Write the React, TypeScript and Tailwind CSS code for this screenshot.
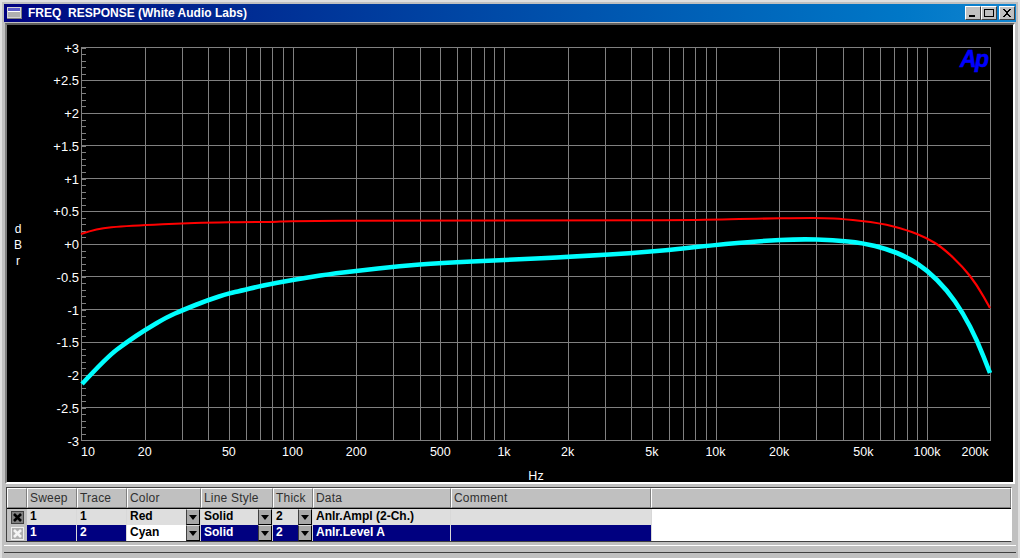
const FONT = '"Liberation Sans", Arial, sans-serif';

const lineX = (f: number) => 81 + 211.5 * Math.log10(f / 10);

const gridFreqs = [
  20, 30, 40, 50, 60, 70, 80, 90, 100, 200, 300, 400, 500, 600, 700, 800, 900, 1000, 2000, 3000, 4000, 5000, 6000, 7000,
  8000, 9000, 10000, 20000, 30000, 40000, 50000, 60000, 70000, 80000, 90000, 100000,
];

const xLabels = [
  ['10', 10], ['20', 20], ['50', 50], ['100', 100], ['200', 200], ['500', 500], ['1k', 1000], ['2k', 2000],
  ['5k', 5000], ['10k', 10000], ['20k', 20000], ['50k', 50000], ['100k', 100000],
] as const;

const yLabels = ['+3', '+2.5', '+2', '+1.5', '+1', '+0.5', '+0', '-0.5', '-1', '-1.5', '-2', '-2.5', '-3'];

const redTrace = [
  [81, 234], [90, 231], [103, 228], [120, 226.5], [145, 225], [180, 223.5], [209, 222.5], [250, 222], [275, 222],
  [285, 221], [400, 220.5], [600, 220.5], [700, 220], [760, 218.5], [800, 218], [825, 218], [843, 219], [880, 223],
  [907, 230], [927, 238], [943, 248], [963, 267], [977, 285], [990, 308],
];

const cyanTrace = [
  [82, 384], [107, 357], [127, 342], [145, 330], [167, 317], [183, 310], [208, 300], [230, 293], [240, 291], [260, 286],
  [292, 280], [330, 274], [356, 271], [400, 266], [440, 263], [504, 260], [568, 257], [650, 252], [715, 245], [760, 241],
  [800, 239], [833, 240], [863, 243], [887, 249], [907, 257], [927, 270], [947, 290], [963, 313], [977, 340], [990, 373],
];

// quadratic through the midpoints, so the traces don't look faceted
const toPath = (pts: number[][]) => {
  let d = `M${pts[0][0]} ${pts[0][1]}`;
  for (let i = 1; i < pts.length - 1; i++) {
    const mx = (pts[i][0] + pts[i + 1][0]) / 2;
    const my = (pts[i][1] + pts[i + 1][1]) / 2;
    d += ` Q${pts[i][0]} ${pts[i][1]} ${mx} ${my}`;
  }
  const last = pts[pts.length - 1];
  return `${d} L${last[0]} ${last[1]}`;
};

function FreqChart() {
  const plotTop = 47.5;
  const plotBottom = 440.5;
  const step = (plotBottom - plotTop) / 12;
  return (
    <svg viewBox="7 25 1006 457" className="block h-[457px] w-[1006px] bg-black" style={{ fontFamily: FONT }}>
      <g stroke="#808080" strokeWidth="1" shapeRendering="crispEdges">
        {gridFreqs.map((f) => (
          <line key={f} x1={Math.round(lineX(f)) + 0.5} x2={Math.round(lineX(f)) + 0.5} y1={plotTop} y2={plotBottom} />
        ))}
        {yLabels.map((_, i) => (
          <line key={i} x1={81} x2={990.5} y1={Math.round(plotTop + i * step - 0.5) + 0.5} y2={Math.round(plotTop + i * step - 0.5) + 0.5} />
        ))}
        {/* minor ticks on the left axis */}
        {Array.from({ length: 60 }, (_, i) => (
          <line key={i} x1={81} x2={86} y1={Math.round(plotTop + (i * step) / 5) + 0.5} y2={Math.round(plotTop + (i * step) / 5) + 0.5} />
        ))}
        <line x1={81.5} x2={81.5} y1={plotTop} y2={plotBottom} />
        <line x1={990.5} x2={990.5} y1={plotTop} y2={plotBottom} />
      </g>
      <path d={toPath(redTrace)} fill="none" stroke="#ff0000" strokeWidth="2.2" strokeLinejoin="round" />
      <path d={toPath(cyanTrace)} fill="none" stroke="#00ffff" strokeWidth="4.6" strokeLinejoin="round" />
      <g fill="#ffffff" fontSize="13">
        {yLabels.map((label, i) => (
          <text key={label} x={79} y={plotTop + i * step + 5} textAnchor="end">{label}</text>
        ))}
        {xLabels.map(([label, f]) => (
          <text key={label} x={f === 10 ? 88 : lineX(f)} y={456} textAnchor="middle" fontSize="12.5">{label}</text>
        ))}
        <text x={975} y={456} textAnchor="middle" fontSize="12.5">200k</text>
        <text x={536} y={480} textAnchor="middle" fontSize="12.5">Hz</text>
        <text x={18} y={233} textAnchor="middle" fontSize="12">d</text>
        <text x={18} y={249} textAnchor="middle" fontSize="12">B</text>
        <text x={18} y={265} textAnchor="middle" fontSize="12">r</text>
      </g>
      <text x={960} y={67} fill="#0000ff" stroke="#0000ff" strokeWidth="0.5" fontSize="23" fontWeight="700" fontStyle="italic" letterSpacing="-1.5">Ap</text>
    </svg>
  );
}

function WinButton({ kind, className }: { kind: 'min' | 'max' | 'close'; className?: string }) {
  return (
    <div className={`flex h-[14px] w-4 items-center justify-center border border-t-white border-l-white border-r-[#404040] border-b-[#404040] bg-[#c0c0c0] ${className ?? ''}`}>
      <svg width="12" height="10" viewBox="0 0 12 10" shapeRendering="crispEdges">
        {kind === 'min' && <rect x="2" y="7" width="6" height="2" fill="#000" />}
        {kind === 'max' && <path d="M1.5 1.5h9v7h-9z M1 1.5h10" fill="none" stroke="#000" strokeWidth="1" />}
        {kind === 'close' && <path d="M2 1l2 0 2 2.5 2-2.5 2 0-3 4 3 4-2 0-2-2.5-2 2.5-2 0 3-4z" fill="#000" />}
      </svg>
    </div>
  );
}

function HeaderCell({ label, className }: { label?: string; className: string }) {
  return (
    <div className={`flex h-5 items-center overflow-hidden border border-t-white border-l-white border-r-[#808080] border-b-[#808080] bg-[#c0c0c0] pl-[2px] text-xs tracking-[0.2px] text-[#303030] ${className}`}>
      {label}
    </div>
  );
}

function DropButton() {
  return (
    <div className="ml-auto flex h-full w-[14px] shrink-0 items-center justify-center border border-t-[#dfdfdf] border-l-[#404040] border-r-black border-b-black bg-[#a8a8a8]">
      <svg width="8" height="5" viewBox="0 0 8 5"><path d="M0 0h8L4 5z" fill="#000" /></svg>
    </div>
  );
}

type RowProps = { sweep: string; trace: string; color: string; style: string; thick: string; data: string; selected?: boolean };

function TraceRow({ sweep, trace, color, style, thick, data, selected }: RowProps) {
  const cell = selected ? 'bg-[#000080] text-white' : 'bg-[#dedede] text-black';
  const base = 'flex h-full items-center overflow-hidden border-r border-r-[#d8d8d8] text-xs font-bold';
  const label = 'pb-[2px] pl-[3px]';
  return (
    <div className="flex h-4 items-stretch">
      <div className="flex h-full w-5 items-center justify-center bg-[#c0c0c0]">
        <div className={`flex h-[13px] w-[13px] items-center justify-center border ${selected ? 'border-[#f0f0f0] bg-[#b0b0b0]' : 'border-[#404040] bg-[#808080]'}`}>
          <svg width="9" height="9" viewBox="0 0 9 9"><path d="M1 1l7 7M8 1L1 8" stroke={selected ? '#f4f4f4' : '#000'} strokeWidth="2.6" /></svg>
        </div>
      </div>
      <div className={`${base} ${cell} w-[50px]`}><span className={label}>{sweep}</span></div>
      <div className={`${base} ${cell} w-[50px]`}><span className={label}>{trace}</span></div>
      <div className={`${base} w-[74px] ${selected ? 'bg-white text-black' : cell}`}><span className={label}>{color}</span><DropButton /></div>
      <div className={`${base} ${cell} w-[72px]`}><span className={label}>{style}</span><DropButton /></div>
      <div className={`${base} ${cell} w-10`}><span className={label}>{thick}</span><DropButton /></div>
      <div className={`${base} ${cell} w-[138px]`}><span className={label}>{data}</span></div>
      <div className={`${base} ${cell} w-[201px]`} />
    </div>
  );
}

export default function App() {
  return (
    <div className="flex h-[558px] w-[1020px] flex-col overflow-hidden border-t-2 border-r-2 border-l-2 border-[#dfdfdf] bg-[#c0c0c0] pt-[2px] pr-[2px] pl-[2px]" style={{ fontFamily: FONT }}>
      {/* title bar */}
      <div className="flex h-[18px] shrink-0 items-center bg-linear-to-r from-[#000080] to-[#1084d0] pr-[1px] pl-[3px]">
        <svg width="15" height="12" viewBox="0 0 15 12" shapeRendering="crispEdges">
          <rect width="15" height="12" fill="#808080" />
          <rect x="0" y="0" width="14" height="11" fill="#d4d4d4" />
          <rect x="1" y="1" width="12" height="3" fill="#5a5ac8" />
          <rect x="1" y="4" width="12" height="1" fill="#ffffff" />
          <rect x="1" y="5" width="12" height="5" fill="#b0b0b0" />
        </svg>
        <span className="ml-[6px] whitespace-pre text-xs font-bold text-white">FREQ  RESPONSE (White Audio Labs)</span>
        <div className="ml-auto flex">
          <WinButton kind="min" />
          <WinButton kind="max" />
          <WinButton kind="close" className="ml-[2px]" />
        </div>
      </div>

      {/* chart panel */}
      <div className="mt-[1px] ml-[1px] w-fit border-t-2 border-l-2 border-t-[#606060] border-l-[#808080] border-r-2 border-b-2 border-r-white border-b-white">
        <FreqChart />
      </div>

      {/* trace table */}
      <div className="mt-[3px] ml-[2px] w-[1006px] border border-[#404040] border-r-white bg-white">
        <div className="flex border-b border-b-black">
          <HeaderCell className="w-5" />
          <HeaderCell label="Sweep" className="w-[50px]" />
          <HeaderCell label="Trace" className="w-[50px]" />
          <HeaderCell label="Color" className="w-[74px]" />
          <HeaderCell label="Line Style" className="w-[72px]" />
          <HeaderCell label="Thick" className="w-10" />
          <HeaderCell label="Data" className="w-[138px]" />
          <HeaderCell label="Comment" className="w-[200px]" />
          <HeaderCell className="flex-1" />
        </div>
        <TraceRow sweep="1" trace="1" color="Red" style="Solid" thick="2" data="Anlr.Ampl (2-Ch.)" />
        <TraceRow sweep="1" trace="2" color="Cyan" style="Solid" thick="2" data="Anlr.Level A" selected />
      </div>

      {/* bottom frame */}
      <div className="mt-[3px] h-[1px] bg-white" />
      <div className="mt-[6px] h-[1px] bg-[#404040]" />
    </div>
  );
}
